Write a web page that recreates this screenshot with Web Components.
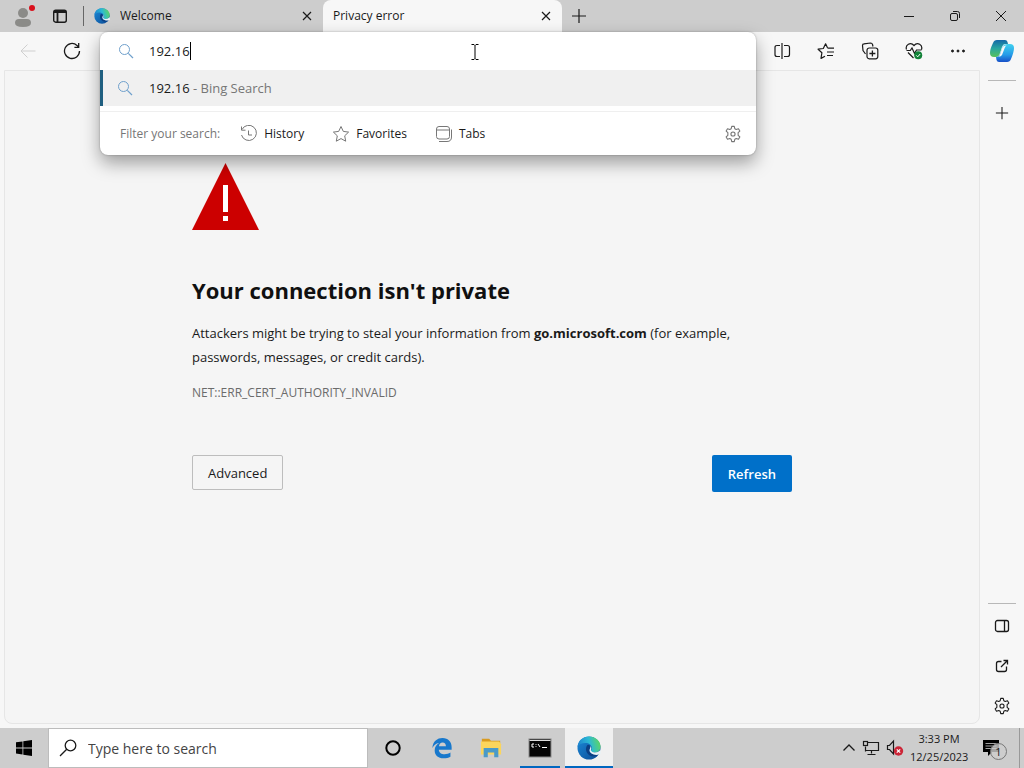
<!DOCTYPE html>
<html lang="en">
<head>
<meta charset="utf-8">
<title>Privacy error</title>
<style>
  html, body { margin: 0; height: 100%; }
  body { font-family: "Open Sans", "Noto Sans", sans-serif; font-size: 12px; color: #1a1a1a; overflow: hidden; background: #cdcdcd; }
</style>
</head>
<body>
<desk-top></desk-top>
<script>
const ICONS = {
  profile: ['0 0 24 24', '<circle cx="11" cy="9" r="5" fill="#8b8b88"/><path d="M3 19q0-4 4-4h8q4 0 4 4 0 4-8 4t-8-4z" fill="#8b8b88"/><circle cx="20" cy="4" r="3" fill="#d9101c"/>'],
  workspace: ['0 0 16 16', '<rect x="1.7" y="2.2" width="12.6" height="12" rx="2" stroke-width="1.4"/><path d="M2 4h12M5.5 5v9" stroke-width="1.8"/>'],
  close: ['0 0 12 12', '<path d="M2 2l8 8M10 2l-8 8" stroke-width="1.2"/>'],
  plus: ['0 0 16 16', '<path d="M8 1v14M1 8h14" stroke-width="1.2"/>'],
  min: ['0 0 12 12', '<path d="M1 6.5h10"/>'],
  restore: ['0 0 12 12', '<rect x="1.5" y="3.5" width="7" height="7" rx="1.5"/><path d="M4 1.5h4.500q2 0 2 2V8"/>'],
  winclose: ['0 0 12 12', '<path d="M1 1l10 10M11 1L1 11"/>'],
  back: ['0 0 16 16', '<path d="M15.500 8H1M7.500 1.500L1 8l6.500 6.500" stroke="#cfcfcf"/>'],
  refresh: ['0 0 18 18', '<path d="M16.500 9a7.500 7.500 0 1 1-2.500-5.600l1.500 1.600M15.700 1v4.300h-4.300" stroke-width="1.300"/>'],
  search: ['0 0 16 16', '<circle cx="6.500" cy="6.500" r="5" stroke="#6fa0cc"/><path d="M10.300 10.300l4.700 4.700" stroke="#6fa0cc" stroke-width="1.200"/>'],
  history: ['0 0 18 18', '<path d="M2 4.500A7.600 7.600 0 1 1 1.500 10M1.500 1.500v3.700h4M8.500 5.500v4.500h3.500" stroke="#777"/>'],
  star: ['0 0 18 18', '<path d="M9 1.500l2.300 4.900 5.300.7-3.900 3.700 1 5.400L9 13.600l-4.700 2.600 1-5.400L1.400 7.100l5.300-.7z" stroke="#777" stroke-linejoin="round"/>'],
  tabs: ['0 0 18 18', '<rect x="1.500" y="1.500" width="13" height="12.500" rx="2.500" stroke="#777"/><path d="M1.500 5h13M4 16.500h8q4.500 0 4.500-4.500V4.500" stroke="#777"/>'],
  gear: ['0 0 20 20', '<path d="M8.600 1.500h2.800l.6 2.600 1.600.9 2.500-.8 1.500 2.500-1.900 1.800v3l1.900 1.800-1.500 2.500-2.500-.8-1.600.9-.6 2.600H8.600L8 15.900l-1.600-.9-2.500.8-1.500-2.500 1.900-1.800v-3L2.400 6.700l1.500-2.500 2.500.8L8 4.100z" stroke-linejoin="round" stroke-width="1.200"/><circle cx="10" cy="10" r="2.300" stroke-width="1.200"/>'],
  split: ['0 0 18 18', '<path d="M7 3.500H4q-2 0-2 2v7q0 2 2 2h3M11 3.500h3.500q2 0 2 2v7q0 2-2 2H11M9 1v16" stroke-width="1.200"/>'],
  favs: ['0 0 18 18', '<path d="M10.500 5.800L8.600 1.800 6.300 6.500l-5.200.7 3.800 3.500-.9 5.700 4-2.200M10.500 6.200h6.500M10 10h7M10 13.500h6" stroke-width="1.200" stroke-linejoin="round"/>'],
  collections: ['0 0 18 18', '<path d="M4.500 12L2 8.500 1.500 3.500Q1.500 2 3 1.900L9.500 1q1.700 0 2 1.500l.5 2" stroke-width="1.200"/><rect x="6" y="6" width="10.800" height="10.800" rx="2.200" stroke-width="1.200"/><path d="M11.400 8.500v6M8.400 11.500h6" stroke-width="1.300"/>'],
  health: ['0 0 18 18', '<path d="M1.500 7.500C0 3 5.500-.5 9 3.500c3.500-4 9-.5 7.500 4M3 10.500l5.500 5.500M1.500 8.500h3.800L7 6l2.500 5.500L11.500 8h5" stroke-width="1.200"/><circle cx="13.200" cy="13.300" r="4" fill="#128238"/><path d="M11.300 13.400l1.400 1.400 2.500-2.800" stroke="#fff"/>'],
  dots: ['0 0 16 16', '<g fill="#1a1a1a"><circle cx="2.500" cy="8" r="1"/><circle cx="8" cy="8" r="1"/><circle cx="13.500" cy="8" r="1"/></g>'],
  copilot: ['0 0 24 24', '<defs><linearGradient id="a" x1="0" y1="0" x2="0" y2="1"><stop offset="0" stop-color="#1468a8"/><stop offset=".5" stop-color="#28a6a0"/><stop offset="1" stop-color="#58c25c"/></linearGradient><linearGradient id="b" x1="0" y1="0" x2="0" y2="1"><stop offset="0" stop-color="#41d1ef"/><stop offset=".6" stop-color="#259be8"/><stop offset="1" stop-color="#1850c8"/></linearGradient></defs><path d="M7 1h8q2 0 2.500 2L18 5h-3q-2 0-3 3l-2 6q-1 4-4 4H4q-4 0-4-4 0-4 3-10 1-3 4-3z" fill="url(#a)"/><path d="M17.500 5H20q4 0 4 4 0 4-3 11-1 3-4 3H9q-2 0-2.500-2L6 18q3 0 4-3l3-8q1-2 4.500-2z" fill="url(#b)"/><path d="M16.500 6.500q-1.500 1-2 3L12 16q-.8 1.700-3.500 1.700 1.200-1 1.800-3l2-6q.8-2.200 4.200-2.200z" fill="#f7f7f7"/>'],
  sidebar: ['0 0 16 16', '<rect x="1.500" y="2.500" width="13" height="11" rx="2" stroke-width="1.300"/><path d="M10.500 2.500v11" stroke-width="1.300"/>'],
  external: ['0 0 16 16', '<path d="M7.500 3.500h-3q-2 0-2 2v6q0 2 2 2h6q2 0 2-2v-3M9.500 2.500h4v4M13.500 2.500L7 9" stroke-width="1.300"/>'],
  edge: ['0 0 24 24', '<defs><linearGradient id="g" x1="0" y1=".4" x2="1" y2=".2"><stop offset="0" stop-color="#1e83cf"/><stop offset=".5" stop-color="#2cb9d4"/><stop offset="1" stop-color="#62d957"/></linearGradient><linearGradient id="h" x1="0" y1="0" x2="1" y2="1"><stop offset="0" stop-color="#1b8ad8"/><stop offset="1" stop-color="#0c4a94"/></linearGradient></defs><circle cx="12" cy="12" r="11.500" fill="url(#h)"/><path d="M.6 11C1 4 6.500.5 12 .5c6.500 0 11.500 4.500 11.500 10 0 4-3 6-6 6-2.500 0-4-1-3.500-2 2-2.500.5-6.500-4-7.500C6 6.500 2 8 .6 11z" fill="url(#g)"/><path d="M10 9.500c-3 5 1 11.500 7.500 11 2.500-.5 4.500-2 4.500-3-4 2-9 .5-9.500-2.500-.3-2 1.500-2 1-4-.5-2-2.500-2.800-3.500-1.500z" fill="#0b3f83"/><path d="M13.500 9.500q1.500 2.500.3 5 1 2 4 2 3 0 5.700-2.500l.5 3.500-1.800 1q-3 .8-5.500 0-4-1.500-4.200-4c0-2 1.500-3 1-5z" fill="#e9f2f5"/>'],
  start: ['0 0 16 16', '<path d="M0 2.300L6.500 1.400v6.100H0zM7.300 1.300L16 0v7.500H7.300zM0 8.400h6.500v6.100L0 13.600zM7.300 8.400H16V16l-8.700-1.300z" fill="#000"/>'],
  find: ['0 0 18 18', '<circle cx="11.500" cy="6.500" r="5.300" stroke-width="1.300"/><path d="M7.700 10.300L1 17" stroke-width="1.300"/>'],
  ring: ['0 0 18 18', '<circle cx="9" cy="9" r="6.700" stroke="#000" stroke-width="2"/>'],
  olde: ['0 0 24 24', '<path d="M1.500 12C2 4.500 7 1 12.500 1 19 1 22.500 5.500 22.500 11v2.800H8.500c.2 3.500 3 5 6.200 5 2.500 0 4.800-.7 6.500-1.800v4.500c-2 1.200-4.600 1.800-7.500 1.800-6 0-9.700-3.500-9.700-8.600 0-3.700 2-6.600 5-8.200-4 .4-6 2.500-7.500 5.500zM8.700 10h7.600c0-2.500-1.300-4-3.600-4S9 7.600 8.700 10z" fill="#1878cc"/>'],
  folder: ['0 0 24 24', '<path d="M2 2h8l2 2h10v3H2z" fill="#d99b20"/><path d="M1 5h20l2 3v11H1z" fill="#fbd55c"/><path d="M4 12h16v10h-4.500v-5h-7v5H4z" fill="#4a9ac8"/>'],
  cmd: ['0 0 24 24', '<rect x="1" y="3" width="22" height="18" fill="#050505" stroke="#888"/><path d="M1.500 4.500h21" stroke="#ddd"/><path d="M6 8H4v3h2M8 8v.8M8 10.200v.8M10 8l2 3M14 11.500h5" stroke="#fff"/>'],
  chevron: ['0 0 14 14', '<path d="M1.500 9.500L7 4l5.500 5.500" stroke-width="1.300"/>'],
  network: ['0 0 18 18', '<path d="M5.500 3.500h11v8h-13v-4M9.500 11.500v3M5.500 15.500h8M3.500 7.500v5" stroke-width="1.200"/><rect x="1.500" y="2.500" width="4" height="4" stroke-width="1.200"/>'],
  sound: ['0 0 18 18', '<path d="M1.500 6.500h2l4-4.500v13l-4-4.500h-2z" stroke-width="1.200"/><circle cx="12.500" cy="12" r="4.700" fill="#cc2638"/><path d="M10.800 10.300l3.400 3.400M14.200 10.300l-3.400 3.400" stroke="#fff" stroke-width="1.200"/>'],
  note: ['0 0 18 18', '<path d="M1 1h16v12h-7l-4 4v-4H1z" fill="#000"/><path d="M3.500 4.500h11M3.500 7h11M3.500 9.500h11" stroke="#ccc" stroke-width=".8"/>'],
  warning: ['0 0 67 67', '<path d="M33.500 0L67 67H0z" fill="#cc0000"/><path d="M31 22h5v27h-5zM31 53h5v5h-5z" fill="#fff"/>'],
  ibeam: ['0 0 8 18', '<path d="M.5 1.500h2.500l1 1 1-1h2.500M4 2.500v13M.5 16.500h2.500l1-1 1 1h2.500" stroke="#000"/>']
};

/* Shared base: writes the subclass's style and markup into an open root. */
class Base extends HTMLElement {
  constructor() {
    super();
    this.attachShadow({ mode: 'open' }).innerHTML =
      `<style>*{box-sizing:border-box}button{font:inherit;color:inherit;background:none;border:0;padding:0;display:flex;align-items:center;justify-content:center}input{font:inherit;color:inherit;border:0;outline:0;padding:0;background:none}${this.constructor.css}</style>${this.constructor.html}`;
  }
}
const define = (name, css, html) =>
  customElements.define(name, class extends Base { static css = css; static html = html; });

customElements.define('ui-icon', class extends HTMLElement {
  connectedCallback() {
    if (this.shadowRoot) return;
    const [box, art] = ICONS[this.getAttribute('name')];
    const size = Number(this.getAttribute('size') || 18);
    const [, , w, h] = box.split(' ').map(Number);
    this.attachShadow({ mode: 'open' }).innerHTML =
      `<style>:host{display:inline-flex;flex:none}svg{display:block}</style>
       <svg viewBox="${box}" width="${Math.round(size * w / h)}" height="${size}" fill="none" aria-hidden="true">${art.replace(/<(path|rect|circle)(?![^>]*(?:stroke|fill)=)/g, '<$1 stroke="#1a1a1a"')
         .replace(/<(path|rect|circle)(?=[^>]*stroke-width)(?![^>]*(?:stroke|fill)=)/g, '<$1 stroke="#1a1a1a"')}</svg>`;
  }
});

define('browser-tab', `
  :host{display:flex;align-items:center;flex:0 1 239px;min-width:0;height:32px;padding:0 10px;gap:10px}
  :host([active]){background:#f7f7f7;border-radius:8px 8px 0 0}
  .title{flex:1;white-space:nowrap;overflow:hidden;line-height:16px}`,
  `<slot name="icon"></slot><span class="title"><slot></slot></span><button aria-label="Close tab"><ui-icon name="close" size="12"></ui-icon></button>`);

define('tab-strip', `
  :host{display:flex;height:32px;background:#cdcdcd}
  .lead{display:flex;align-items:center;width:84px;padding:0 0 0 12px}
  .lead button + button{margin-left:16px}
  .rule{width:1px;height:20px;background:#666;margin-left:15px}
  .new{width:34px}
  .win{display:flex;margin-left:auto}
  .win button{width:46px}`,
  `<div class="lead"><button aria-label="Profile"><ui-icon name="profile" size="24"></ui-icon></button><button aria-label="Tab actions"><ui-icon name="workspace" size="16"></ui-icon></button><span class="rule"></span></div>
   <browser-tab><ui-icon slot="icon" name="edge" size="16"></ui-icon>Welcome</browser-tab>
   <browser-tab active>Privacy error</browser-tab>
   <button class="new" aria-label="New tab"><ui-icon name="plus" size="16"></ui-icon></button>
   <div class="win"><button aria-label="Minimize"><ui-icon name="min" size="12"></ui-icon></button><button aria-label="Restore"><ui-icon name="restore" size="12"></ui-icon></button><button aria-label="Close"><ui-icon name="winclose" size="12"></ui-icon></button></div>`);

define('filter-chip', `:host{display:block}button{gap:6px;line-height:16px}`,
  `<button><slot name="icon"></slot><slot></slot></button>`);

define('address-box', `
  :host{display:block;position:relative;flex:1;height:38px;z-index:2}
  .panel{position:absolute;top:0;left:0;right:0;background:#fff;border-radius:8px;box-shadow:0 8px 18px rgba(0,0,0,.36),0 0 2px rgba(0,0,0,.3)}
  .row{display:flex;align-items:center;height:38px;padding-left:18px;font-size:13px}
  input{margin-left:15px;field-sizing:content}
  .caret{width:1px;height:18px;background:#000}
  .hit{height:36px;background:#f0f0f0;border-left:3px solid #1f5f80;padding-left:14px}
  .hit span{margin-left:16px;white-space:pre}
  .hit i{font-style:normal;color:#767676}
  .foot{display:flex;align-items:center;height:44px;margin-top:5px;padding:0 14px 0 20px;border-top:1px solid #efefef}
  .foot .label{color:#767676;margin-right:20px}
  filter-chip{margin-right:28px}
  .set{margin-left:auto}.set ui-icon{opacity:.6}`,
  `<div class="panel">
     <div class="row"><ui-icon name="search" size="16"></ui-icon><input type="text" value="192.16" aria-label="Search or enter web address"><span class="caret"></span></div>
     <div class="row hit"><ui-icon name="search" size="16"></ui-icon><span>192.16<i> - Bing Search</i></span></div>
     <div class="foot"><span class="label">Filter your search:</span>
       <filter-chip><ui-icon slot="icon" name="history"></ui-icon>History</filter-chip>
       <filter-chip><ui-icon slot="icon" name="star"></ui-icon>Favorites</filter-chip>
       <filter-chip><ui-icon slot="icon" name="tabs"></ui-icon>Tabs</filter-chip>
       <button class="set" aria-label="Search settings"><ui-icon name="gear"></ui-icon></button></div>
   </div>`);

define('tool-bar', `
  :host{display:flex;height:38px}
  button{width:44px}
  nav{display:flex}
  .before{padding:0 6px}
  .after{padding-left:4px}`,
  `<nav class="before"><button aria-label="Back" disabled><ui-icon name="back" size="16"></ui-icon></button><button aria-label="Refresh"><ui-icon name="refresh"></ui-icon></button></nav>
   <address-box></address-box>
   <nav class="after"><button aria-label="Split screen"><ui-icon name="split"></ui-icon></button><button aria-label="Favorites"><ui-icon name="favs"></ui-icon></button><button aria-label="Collections"><ui-icon name="collections"></ui-icon></button><button aria-label="Browser essentials"><ui-icon name="health"></ui-icon></button><button aria-label="More"><ui-icon name="dots" size="16"></ui-icon></button></nav>`);

define('error-page', `
  :host{display:block;flex:1;min-height:0;margin:0 0 4px 4px;padding-top:92px;border:1px solid #e6e6e6;border-radius:0 0 8px 8px;background:#f5f5f5}
  main{max-width:600px;margin:0 auto}
  ui-icon{display:flex}
  h1{font-size:22px;line-height:32px;margin:44px 0 15px;color:#101010}
  p{margin:0;font-size:13px;line-height:24px}
  .code{font-size:12px;line-height:16px;margin-top:16px;color:#6b6b6b}
  .actions{display:flex;justify-content:space-between;align-items:flex-start;margin-top:54px;font-size:13px}
  button{height:35px;padding:0 15px;border:1px solid #bdbdbd;border-radius:2px}
  .go{height:37px;padding:0 16px;border:0;background:#0070c9;color:#fff;font-weight:600}`,
  `<main><ui-icon name="warning" size="67"></ui-icon>
   <h1>Your connection isn't private</h1>
   <p>Attackers might be trying to steal your information from <b>go.microsoft.com</b> (for example, <span>passwords, messages, or credit cards).</span></p>
   <div class="code">NET::ERR_CERT_AUTHORITY_INVALID</div>
   <div class="actions"><button>Advanced</button><button class="go">Refresh</button></div></main>`);

define('side-bar', `
  :host{display:flex;flex-direction:column;width:44px;align-items:center}
  button{width:44px;height:40px}
  .copilot{height:38px}
  hr{width:28px;height:1px;border:0;margin:10px 0 12px;background:#b8b8b8}
  .bottom{margin:auto 0 2px}
  .bottom hr{margin:0 8px 2px}`,
  `<button class="copilot" aria-label="Copilot"><ui-icon name="copilot" size="24"></ui-icon></button><hr>
   <button aria-label="Customize"><ui-icon name="plus" size="14"></ui-icon></button>
   <div class="bottom"><hr><button aria-label="Hide sidebar"><ui-icon name="sidebar" size="16"></ui-icon></button><button aria-label="Open in window"><ui-icon name="external" size="16"></ui-icon></button><button aria-label="Settings"><ui-icon name="gear"></ui-icon></button></div>`);

define('browser-window', `
  :host{display:flex;flex-direction:column;flex:1;min-height:0;background:#f7f7f7}
  .body{display:flex;flex:1;min-height:0}
  .main{display:flex;flex-direction:column;flex:1;min-width:0}`,
  `<tab-strip></tab-strip><div class="body"><div class="main"><tool-bar></tool-bar><error-page></error-page></div><side-bar></side-bar></div>`);

define('task-button', `
  :host{display:block;width:48px}
  button{width:100%;height:100%}
  :host([open]) button{border-bottom:2px solid #0067c0;padding-top:2px}
  :host([open]){padding:0 4px}
  :host([front]){padding:0;background:#f0f0f0}`,
  `<button><slot></slot></button>`);

define('task-bar', `
  :host{display:flex;height:40px;background:#cdcdcd}
  .start{width:48px}
  .find{display:flex;align-items:center;flex:0 1 320px;background:#fff;border:1px solid #bcbcbc;padding-left:10px;gap:11px;font-size:14px}
  .find input{flex:1;min-width:0}
  .find input::placeholder{color:#444;opacity:1}
  .apps{display:flex;gap:1px;padding-left:1px}
  task-button{box-sizing:border-box}
  .tray{display:flex;align-items:center;margin-left:auto;gap:6px}
  .clock{text-align:center;line-height:18px;font-size:11px;width:58px;white-space:nowrap}
  .note{position:relative;margin:0 6px 0 8px;width:25px;justify-content:flex-start}
  .badge{position:absolute;right:0;top:4px;width:17px;height:17px;border:1px solid #777;border-radius:50%;background:#cdcdcdcc;font-size:11px;line-height:15px;text-align:center}
  .peek{width:5px;height:40px;border-left:1px solid #999}`,
  `<button class="start" aria-label="Start"><ui-icon name="start" size="16"></ui-icon></button>
   <label class="find"><ui-icon name="find"></ui-icon><input type="text" placeholder="Type here to search" aria-label="Type here to search"></label>
   <div class="apps"><task-button><ui-icon name="ring"></ui-icon></task-button><task-button><ui-icon name="olde" size="22"></ui-icon></task-button><task-button><ui-icon name="folder" size="22"></ui-icon></task-button><task-button open><ui-icon name="cmd" size="24"></ui-icon></task-button><task-button open front><ui-icon name="edge" size="24"></ui-icon></task-button></div>
   <div class="tray"><button aria-label="Hidden icons"><ui-icon name="chevron" size="14"></ui-icon></button><ui-icon name="network"></ui-icon><ui-icon name="sound"></ui-icon>
   <div class="clock"><div>3:33 PM</div><div>12/25/2023</div></div>
   <button class="note" aria-label="Notifications"><ui-icon name="note" size="18"></ui-icon><span class="badge">1</span></button><span class="peek"></span></div>`);

define('desk-top', `
  :host{display:flex;flex-direction:column;height:100vh}
  .pointer{position:absolute;left:471px;top:43px;z-index:5;pointer-events:none}`,
  `<browser-window></browser-window><task-bar></task-bar><ui-icon class="pointer" name="ibeam"></ui-icon>`);
</script>
</body>
</html>
